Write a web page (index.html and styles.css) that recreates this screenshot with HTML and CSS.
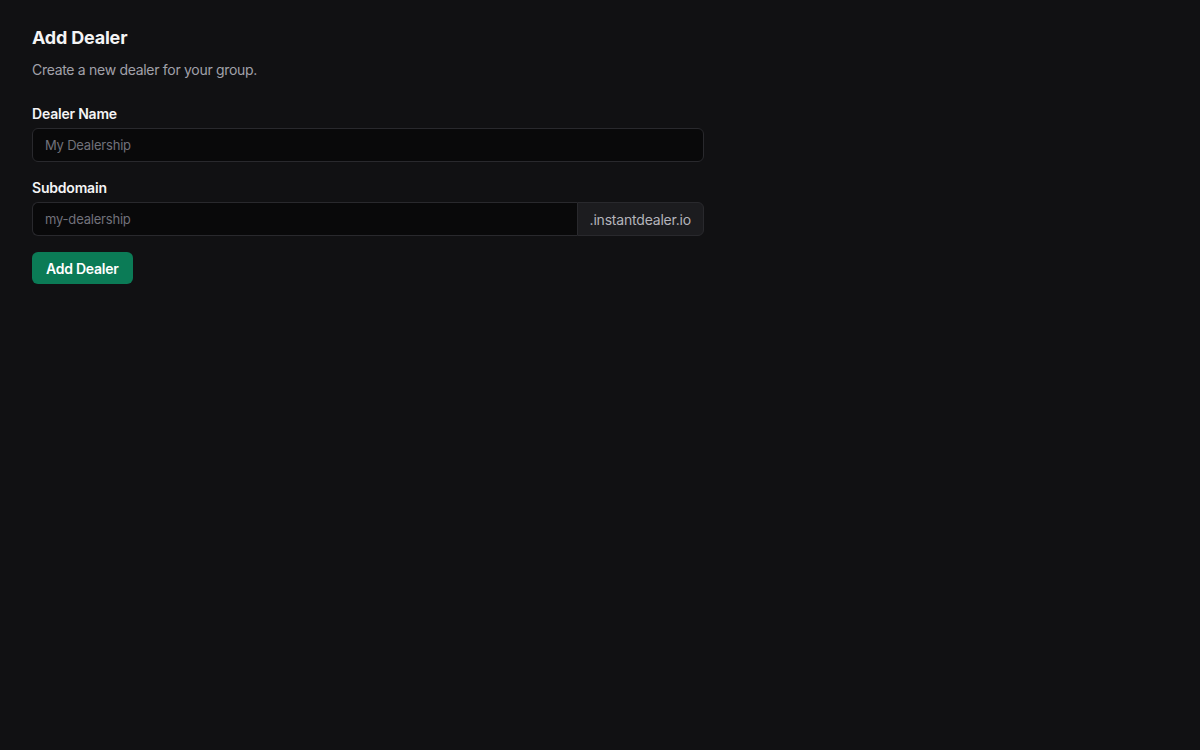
FILE: index.html
```html
<!DOCTYPE html>
<html>
<head>
<meta charset="utf-8">
<link rel="stylesheet" href="styles.css">
</head>
<body>
<main class="page">
  <h1 class="title">Add Dealer</h1>
  <p class="subtitle">Create a new dealer for your group.</p>
  <form class="form">
    <div class="field">
      <label class="label">Dealer Name</label>
      <input class="input" type="text" placeholder="My Dealership">
    </div>
    <div class="field">
      <label class="label">Subdomain</label>
      <div class="group">
        <input class="input input-grouped" type="text" placeholder="my-dealership">
        <span class="suffix">.instantdealer.io</span>
      </div>
    </div>
    <div><button class="button" type="button">Add Dealer</button></div>
  </form>
</main>
</body>
</html>
```
FILE: styles.css
```css
html, body {
  margin: 0;
  padding: 0;
  background: #111113;
  color: #ededef;
  font-family: Inter, "Noto Sans", sans-serif;
}
.page {
  padding: 26px 32px;
  width: 672px;
}
.title {
  margin: 0;
  font-size: 18px;
  font-weight: 700;
  line-height: 24px;
  color: #f4f4f5;
  letter-spacing: -0.2px;
}
.subtitle {
  margin: 10px 0 0;
  font-size: 14px;
  line-height: 20px;
  color: #a1a1aa;
  letter-spacing: -0.3px;
}
.form {
  margin-top: 24px;
  display: flex;
  flex-direction: column;
  gap: 16px;
}
.field {
  display: flex;
  flex-direction: column;
  gap: 4px;
}
.label {
  font-size: 14px;
  font-weight: 600;
  line-height: 20px;
  color: #f4f4f5;
  letter-spacing: -0.2px;
}
.input {
  box-sizing: border-box;
  height: 34px;
  width: 100%;
  padding: 0 12px;
  background: #09090a;
  border: 1px solid #29292d;
  border-radius: 6px;
  color: #ededef;
  font-family: inherit;
  font-size: 13px;
  letter-spacing: -0.2px;
  outline: none;
}
.input::placeholder {
  color: #71717a;
}
.group {
  display: flex;
}
.input-grouped {
  flex: 1;
  border-top-right-radius: 0;
  border-bottom-right-radius: 0;
  border-right: none;
}
.suffix {
  box-sizing: border-box;
  height: 34px;
  display: flex;
  align-items: center;
  padding: 0 12px;
  background: #1c1c1f;
  border: 1px solid #29292d;
  border-radius: 0 6px 6px 0;
  font-size: 14px;
  color: #b4b4bb;
  letter-spacing: -0.2px;
}
.button {
  height: 32px;
  padding: 0 14px;
  background: #0b7b56;
  color: #ffffff;
  border: none;
  border-radius: 6px;
  font-family: inherit;
  font-size: 14px;
  font-weight: 600;
  letter-spacing: -0.25px;
}
```
